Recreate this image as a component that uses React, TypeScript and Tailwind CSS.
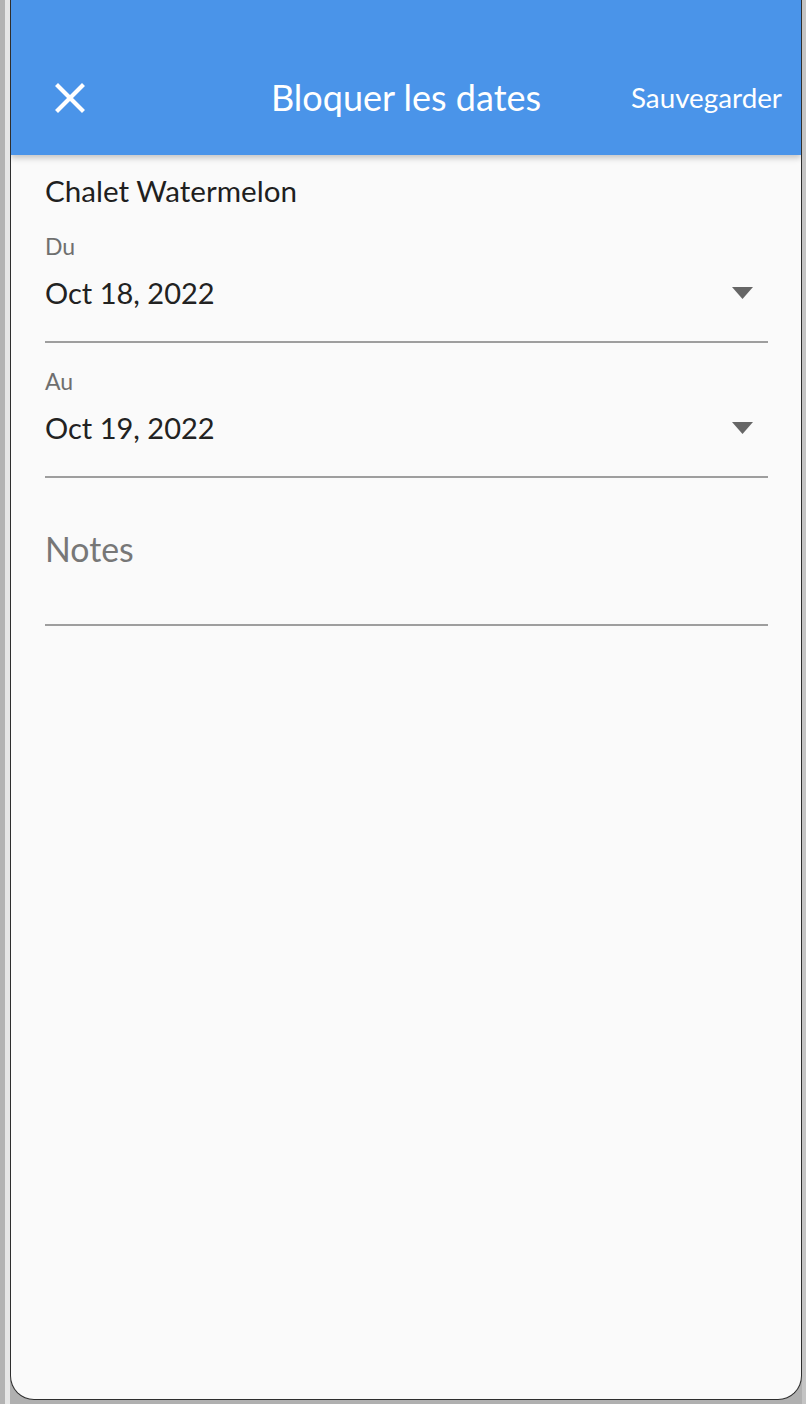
import { useState } from "react";

function CloseIcon() {
  return (
    <svg width="30" height="30" viewBox="0 0 30 30" fill="none">
      <path d="M3 3 L27 27 M27 3 L3 27" stroke="white" strokeWidth="4.2" strokeLinecap="square" />
    </svg>
  );
}

function Caret() {
  return (
    <svg width="21" height="12" viewBox="0 0 21 12">
      <path d="M0 0 L21 0 L10.5 12 Z" fill="#666666" />
    </svg>
  );
}

function DateField({ label, value }: { label: string; value: string }) {
  return (
    <div className="border-b-2 border-[#9e9e9e] pb-[31px]">
      <div className="mt-[24px] text-[23px] leading-[28px] text-[#6f6f6f]">{label}</div>
      <div className="mt-[15px] flex items-center justify-between">
        <span className="text-[29px] leading-[35px] text-[#222222]">{value}</span>
        <span className="mr-[15px] flex">
          <Caret />
        </span>
      </div>
    </div>
  );
}

export default function App() {
  const [notes, setNotes] = useState("");

  return (
    <div
      className="flex h-[1404px] w-full overflow-hidden bg-[#b0b0b0]"
      style={{ fontFamily: "Lato, 'Open Sans', sans-serif" }}
    >
      {/* page behind the sheet */}
      <div className="flex w-[10px] shrink-0">
        <div className="w-[5px] bg-[#b3b3b3]" />
        <div className="w-[5px] bg-[#e6e6e6]" />
      </div>

      <div className="flex h-[1400px] flex-1 flex-col overflow-hidden rounded-b-[24px] border-x border-b border-[#2e2e2e] bg-[#fafafa]">
        <header className="relative z-10 flex h-[155px] shrink-0 items-end bg-[#4a94e9] px-[19px] pb-[36px] shadow-[0_3px_6px_rgba(0,0,0,0.22)]">
          <div className="grid w-full grid-cols-[1fr_auto_1fr] items-center">
            <button className="flex justify-start pl-[25px]">
              <CloseIcon />
            </button>
            <h1 className="text-[36px] leading-[43px] text-white">Bloquer les dates</h1>
            <button className="justify-self-end text-[27.8px] leading-[32px] text-white">
              Sauvegarder
            </button>
          </div>
        </header>

        <div className="pl-[34px] pr-[33px]">
          <div className="mt-[18px] text-[29.6px] leading-[35px] text-[#1f1f1f]">Chalet Watermelon</div>
          <DateField label="Du" value="Oct 18, 2022" />
          <DateField label="Au" value="Oct 19, 2022" />
          <div className="border-b-2 border-[#9e9e9e] pb-[55px] pt-[51px]">
            <input
              value={notes}
              onChange={(e) => setNotes(e.target.value)}
              placeholder="Notes"
              className="block w-full bg-transparent text-[33.8px] leading-[40px] text-[#222222] outline-none placeholder:text-[#777777]"
            />
          </div>
        </div>
      </div>

      <div className="w-[4px] shrink-0 bg-[#c4c4c4]" />
    </div>
  );
}
